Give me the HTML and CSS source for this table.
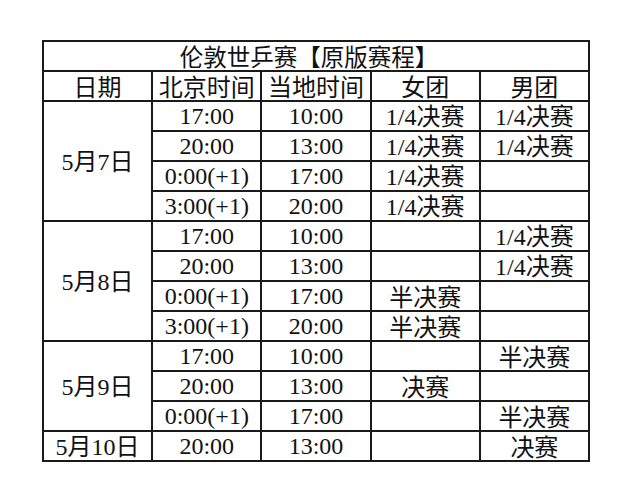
FILE: index.html
```html
<!DOCTYPE html>
<html lang="zh-CN">
<head>
<meta charset="utf-8">
<link rel="stylesheet" href="styles.css">
</head>
<body>
<table class="sched">
  <tr><td class="title cjk" colspan="5">伦敦世乒赛【原版赛程】</td></tr>
  <tr class="head"><td class="cjk">日期</td><td class="cjk">北京时间</td><td class="cjk">当地时间</td><td class="cjk">女团</td><td class="cjk">男团</td></tr>
  <tr><td rowspan="4">5<span class="cjk">月</span>7<span class="cjk">日</span></td><td>17:00</td><td>10:00</td><td>1/4<span class="cjk">决赛</span></td><td>1/4<span class="cjk">决赛</span></td></tr>
  <tr><td>20:00</td><td>13:00</td><td>1/4<span class="cjk">决赛</span></td><td>1/4<span class="cjk">决赛</span></td></tr>
  <tr><td>0:00(+1)</td><td>17:00</td><td>1/4<span class="cjk">决赛</span></td><td></td></tr>
  <tr><td>3:00(+1)</td><td>20:00</td><td>1/4<span class="cjk">决赛</span></td><td></td></tr>
  <tr><td rowspan="4">5<span class="cjk">月</span>8<span class="cjk">日</span></td><td>17:00</td><td>10:00</td><td></td><td>1/4<span class="cjk">决赛</span></td></tr>
  <tr><td>20:00</td><td>13:00</td><td></td><td>1/4<span class="cjk">决赛</span></td></tr>
  <tr><td>0:00(+1)</td><td>17:00</td><td class="cjk">半决赛</td><td></td></tr>
  <tr><td>3:00(+1)</td><td>20:00</td><td class="cjk">半决赛</td><td></td></tr>
  <tr><td rowspan="3">5<span class="cjk">月</span>9<span class="cjk">日</span></td><td>17:00</td><td>10:00</td><td></td><td class="cjk">半决赛</td></tr>
  <tr><td>20:00</td><td>13:00</td><td class="cjk">决赛</td><td></td></tr>
  <tr><td>0:00(+1)</td><td>17:00</td><td></td><td class="cjk">半决赛</td></tr>
  <tr><td>5<span class="cjk">月</span>10<span class="cjk">日</span></td><td>20:00</td><td>13:00</td><td></td><td class="cjk">决赛</td></tr>
</table>
</body>
</html>
```

FILE: styles.css
```css
html, body {
  margin: 0;
  padding: 0;
  background: #fff;
}
.sched {
  border-collapse: collapse;
  margin: 40px 0 0 42px;
  table-layout: fixed;
  width: 548px;
  font-family: "Liberation Serif", "Times New Roman", serif;
  font-size: 24px;
  color: #111;
}
.sched td {
  border: 2px solid #1a1a1a;
  height: 28px;
  padding: 0;
  line-height: 26px;
  text-align: center;
  vertical-align: middle;
  white-space: nowrap;
}
.cjk {
  font-family: "Noto Sans CJK SC", sans-serif;
  font-weight: 400;
}
.sched .title {
  font-size: 23.5px;
  text-indent: -14px;
}
```
